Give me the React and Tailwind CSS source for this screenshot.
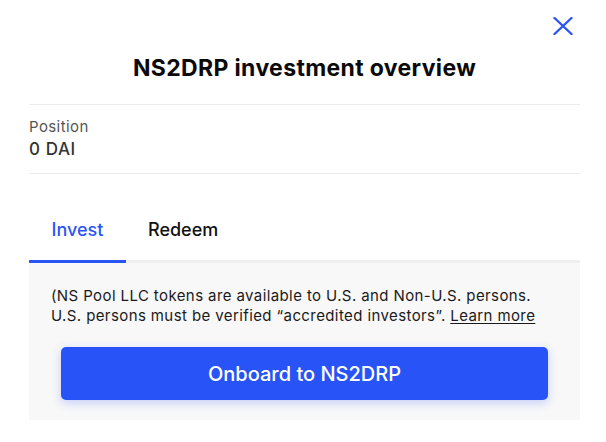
export default function App() {
  return (
    <div className="w-[606px] h-[442px] bg-white" style={{ fontFamily: 'Inter, "Noto Sans", sans-serif' }}>
      <div className="mx-[29px] w-[551px]">
        <div className="pt-[17px] flex justify-end pr-[7px]">
          <svg width="20" height="18" viewBox="0 0 20 18" fill="none">
            <path d="M1.5 1 L18.5 17 M18.5 1 L1.5 17" stroke="#2a55f5" strokeWidth="2.4" strokeLinecap="round" />
          </svg>
        </div>
        <h1 className="mt-[19px] h-[28px] leading-[28px] text-[23px] tracking-[0.35px] font-bold text-center text-[#0a0a0a]">
          NS2DRP investment overview
        </h1>
        <div className="mt-[22px] border-t border-[#ececec]" />
        <div className="pt-[12px] pb-[12px]">
          <div className="text-[15px] leading-[20px] tracking-[0.4px] text-[#555]">Position</div>
          <div className="text-[17px] leading-[24px] tracking-[0.6px] font-medium text-[#333]">0 DAI</div>
        </div>
        <div className="border-t border-[#ececec]" />
        <div className="flex border-b-[3px] border-[#efefef] pt-[44px]">
          <div className="w-[97px] text-center text-[18px] leading-[24px] font-medium text-[#2a55f5] pb-[18px] border-b-[3px] border-[#2a55f5] -mb-[3px]">
            Invest
          </div>
          <div className="pl-[22px] text-[18px] leading-[24px] font-medium text-[#111] pb-[18px]">
            Redeem
          </div>
        </div>
        <div className="bg-[#f8f8f9] pt-[23px] pb-[20px]">
          <p className="pl-[22px] text-[15px] leading-[20px] tracking-[0.4px] text-[#1a1a1a]">
            (NS Pool LLC tokens are available to U.S. and Non-U.S. persons.
            <br />
            U.S. persons must be verified “accredited investors”. <span className="underline underline-offset-2">Learn more</span>
          </p>
          <button className="mt-[21px] mx-[32px] w-[487px] h-[53px] rounded-[5px] bg-[#2853f6] text-white text-[20px] font-medium shadow-[0_3px_10px_rgba(40,83,246,0.25)]">
            Onboard to NS2DRP
          </button>
        </div>
      </div>
    </div>
  );
}
